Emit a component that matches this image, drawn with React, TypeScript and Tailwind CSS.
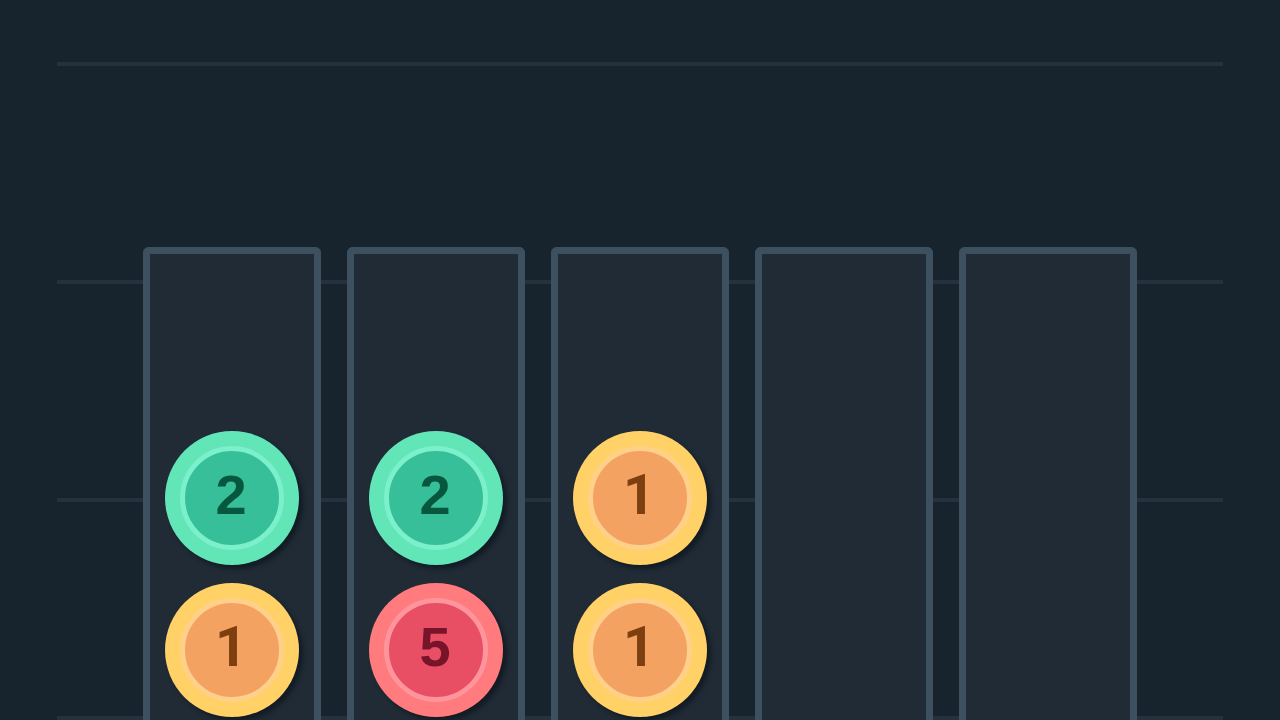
import clsx from "clsx";

type CoinValue = 1 | 2 | 5;

// Rim, face and digit colors for every coin value
const coinStyles: Record<CoinValue, { rim: string; face: string }> = {
  1: {
    rim: "bg-[#ffd166]",
    face: "border-[#ffd08a] bg-[#f4a261] font-[Roboto,sans-serif] text-[#7d3f10]",
  },
  2: {
    rim: "bg-[#62e6b8]",
    face: "border-[#7bf0ca] bg-[#36bf98] font-[Liberation_Sans,Arial,sans-serif] text-[#07573f]",
  },
  5: {
    rim: "bg-[#ff7b7d]",
    face: "border-[#ff959c] bg-[#e94f64] font-[Liberation_Sans,Arial,sans-serif] text-[#78142a]",
  },
};

const columns: CoinValue[][] = [[2, 1], [2, 5], [1, 1], [], []];

const Coin = ({ value }: { value: CoinValue }) => {
  const { rim, face } = coinStyles[value];

  return (
    <div
      className={clsx(
        "flex size-[134px] shrink-0 items-center justify-center rounded-full shadow-[4px_4px_4px_#131c25]",
        rim
      )}
    >
      <div
        className={clsx(
          "flex size-[104px] items-center justify-center rounded-full border-5 pr-0.5 pb-1.5 text-[56px] leading-none font-bold",
          face
        )}
      >
        {value}
      </div>
    </div>
  );
};

const Column = ({ coins }: { coins: CoinValue[] }) => {
  return (
    <div className="flex max-w-[178px] flex-1 flex-col items-center gap-[18px] rounded-t-md border-7 border-b-0 border-[#3c5060] bg-[#202b36] pt-[177px]">
      {coins.map((value, index) => (
        <Coin key={index} value={value} />
      ))}
    </div>
  );
};

const App = () => {
  return (
    <main className="grid min-h-screen overflow-hidden bg-[#18242d]">
      {/* Guide lines behind the board */}
      <div className="col-start-1 row-start-1 flex flex-col gap-[214px] px-[57px] pt-[62px]">
        {[0, 1, 2, 3].map((line) => (
          <hr key={line} className="border-t-4 border-[#25313c]" />
        ))}
      </div>

      {/* Board */}
      <div className="col-start-1 row-start-1 flex justify-center gap-[26px] px-[57px] pt-[247px]">
        {columns.map((coins, index) => (
          <Column key={index} coins={coins} />
        ))}
      </div>
    </main>
  );
};

export default App;
